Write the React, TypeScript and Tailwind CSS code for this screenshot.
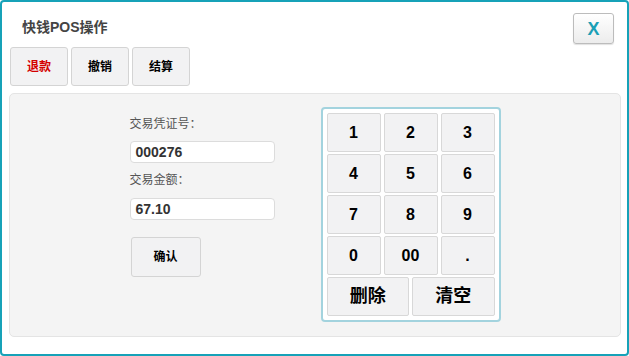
import React from 'react';

const font = { fontFamily: '"Liberation Sans", Arial, "Noto Sans CJK SC", sans-serif' };

const keyRows = [
  ['1', '2', '3'],
  ['4', '5', '6'],
  ['7', '8', '9'],
  ['0', '00', '.'],
];

const KeyButton: React.FC<{ label: string; big?: boolean }> = ({ label, big }) => (
  <button
    className={`flex-1 h-full flex items-center justify-center bg-[#f2f2f3] border border-[#d8d8d8] rounded-[2px] font-bold text-black ${
      big ? 'text-[18px]' : 'text-[16px]'
    }`}
  >
    {label}
  </button>
);

const App: React.FC = () => {
  return (
    <div
      className="w-[629px] h-[356px] border-2 border-[#17a2b8] rounded-[4px] bg-white flex flex-col"
      style={font}
    >
      {/* Header */}
      <div className="flex justify-between items-center pt-[11px] pl-[20px] pr-[13px]">
        <h1 className="text-[14px] font-bold text-[#444] mb-[3px]">快钱POS操作</h1>
        <button className="w-[41px] h-[31px] rounded-[3px] border border-[#bcbcbc] bg-gradient-to-b from-white to-[#ececec] shadow-[0_1px_1px_rgba(0,0,0,0.12)] flex items-center justify-center">
          <span className="text-[18px] font-bold text-[#1b9fb6] leading-none">X</span>
        </button>
      </div>

      {/* Tabs */}
      <div className="flex gap-[3px] pl-[8px] mt-[3px]">
        {['退款', '撤销', '结算'].map((t, i) => (
          <button
            key={t}
            className={`w-[58px] h-[39px] bg-[#f2f2f3] border border-[#d4d4d4] rounded-[3px] text-[12px] font-bold ${
              i === 0 ? 'text-[#d40000]' : 'text-black'
            }`}
          >
            {t}
          </button>
        ))}
      </div>

      {/* Panel */}
      <div className="mt-[7px] ml-[7px] w-[612px] h-[244px] bg-[#f4f4f4] border border-[#e4e4e4] rounded-[5px] pt-[13px] flex justify-center items-start gap-[46px]">
        <div className="w-[145px] mt-[9px] flex flex-col">
          <label className="h-[16px] leading-[16px] text-[12px] text-[#555]">交易凭证号：</label>
          <div className="mt-[9px] h-[22px] bg-white border border-[#dcdcdc] rounded-[4px] pl-[5px] flex items-center text-[14px] font-bold text-[#333]">
            000276
          </div>
          <label className="mt-[9px] h-[16px] leading-[16px] text-[12px] text-[#555]">交易金额：</label>
          <div className="mt-[10px] h-[22px] bg-white border border-[#dcdcdc] rounded-[4px] pl-[5px] flex items-center text-[14px] font-bold text-[#333]">
            67.10
          </div>
          <button className="mt-[17px] ml-[1px] w-[70px] h-[40px] bg-[#f2f2f3] border border-[#d4d4d4] rounded-[3px] text-[12px] font-bold text-black">
            确认
          </button>
        </div>

        <div className="w-[180px] h-[215px] border-2 border-[#a3d3de] rounded-[4px] bg-white p-[4px] flex flex-col gap-[2px]">
          {keyRows.map((row, i) => (
            <div key={i} className="h-[39px] flex gap-[3px]">
              {row.map((k) => (
                <KeyButton key={k} label={k} />
              ))}
            </div>
          ))}
          <div className="h-[39px] flex gap-[3px]">
            <KeyButton label="删除" big />
            <KeyButton label="清空" big />
          </div>
        </div>
      </div>
    </div>
  );
};

export default App;
